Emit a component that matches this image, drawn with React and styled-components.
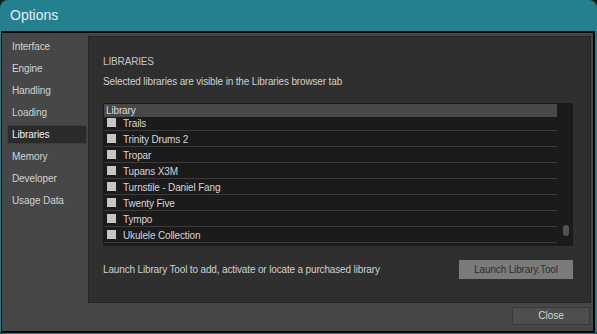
import styled, { createGlobalStyle } from "styled-components";

const GlobalStyle = createGlobalStyle`
    html, body {
        margin: 0;
        padding: 0;
        background: #1a1a1a;
    }
    * { box-sizing: border-box; }
`;

const FONT = `"Liberation Sans", Arial, sans-serif`;

const StyledWindow = styled.div`
    width: 597px;
    height: 334px;
    background: #24808f;
    border-radius: 8px 8px 3px 3px;
    display: flex;
    flex-direction: column;
    font-family: ${FONT};
    overflow: hidden;
`;

const StyledTitleBar = styled.div`
    height: 31px;
    line-height: 31px;
    padding-left: 10px;
    font-size: 14px;
    color: #e4eef0;
`;

const StyledBody = styled.div`
    flex: 1;
    margin: 0 2px 1px 1px;
    border: 1px solid #050505;
    border-width: 2px 2px 2px 1px;
    background: #474747;
    display: grid;
    grid-template-columns: 86px 1fr;
    grid-template-rows: 1fr 28px;
`;

const StyledSidebar = styled.div`
    display: flex;
    flex-direction: column;
    gap: 3px;
    padding-top: 4px;
`;

const StyledNavItem = styled.div`
    height: 19px;
    line-height: 17px;
    margin: 0 1px 0 5px;
    padding-left: 4px;
    font-size: 10px;
    letter-spacing: -0.1px;
    color: ${(p) => (p.$active ? "#f2f2f2" : "#d2d2d2")};
    background: ${(p) => (p.$active ? "#2b2b2b" : "transparent")};
    border: 1px solid ${(p) => (p.$active ? "#3d3d3d" : "transparent")};
`;

const StyledPanelWrap = styled.div`
    padding: 3px 3px 0 0;
    display: flex;
`;

const StyledPanel = styled.div`
    flex: 1;
    background: #2f2f2f;
    border: 1px solid #242424;
    padding: 18px 17px 0 14px;
    display: flex;
    flex-direction: column;
    color: #cfcfcf;
    font-size: 10px;
    letter-spacing: -0.15px;
`;

const StyledHeading = styled.div`
    height: 14px;
    line-height: 14px;
    color: #c4c4c4;
`;

const StyledText = styled.div`
    height: 14px;
    line-height: 14px;
    margin-top: ${(p) => p.$top || 0}px;
`;

const StyledList = styled.div`
    margin-top: 14px;
    width: 470px;
    height: 143px;
    background: #1b1b1b;
    padding: 1px;
    display: grid;
    grid-template-columns: 1fr 15px;
`;

const StyledColumn = styled.div`
    display: flex;
    flex-direction: column;
    overflow: hidden;
`;

const StyledListHead = styled.div`
    height: 13px;
    line-height: 13px;
    background: #484848;
    color: #dadada;
    padding-left: 2px;
    flex: none;
`;

const StyledRows = styled.div`
    flex: 1;
    overflow: hidden;
`;

const StyledRowsInner = styled.div`
    margin-top: ${(p) => -p.$scroll}px;
`;

const StyledRow = styled.div`
    height: 16px;
    border-bottom: 1px solid #3b3b3b;
    display: flex;
    align-items: center;
    padding: 1px 0 0 3px;
    gap: 7px;
    color: #d6d6d6;
`;

const StyledCheck = styled.span`
    width: 9px;
    height: 9px;
    margin-top: -1px;
    background: #c6c6c6;
    flex: none;
`;

const StyledScroll = styled.div`
    display: flex;
    flex-direction: column;
    justify-content: flex-end;
    align-items: center;
    padding: 0 2px 9px 4px;
`;

const StyledThumb = styled.div`
    width: 6px;
    height: 11px;
    border-radius: 3px;
    background: #525252;
`;

const StyledActionRow = styled.div`
    margin-top: 14px;
    display: flex;
    align-items: center;
    justify-content: space-between;
`;

const StyledToolButton = styled.div`
    width: 114px;
    height: 19px;
    line-height: 19px;
    text-align: center;
    background: #7b7b7b;
    color: #2e2e2e;
`;

const StyledFooter = styled.div`
    grid-column: 1 / 3;
    display: flex;
    justify-content: flex-end;
    padding: 4px 4px 0 0;
`;

const StyledCloseButton = styled.div`
    width: 78px;
    height: 18px;
    line-height: 16px;
    text-align: center;
    font-size: 10px;
    color: #d4d4d4;
    background: #4e4e4e;
    border: 1px solid #383838;
`;

const navItems = ["Interface", "Engine", "Handling", "Loading", "Libraries", "Memory", "Developer", "Usage Data"];

const libraries = [
    "Trails",
    "Trinity Drums 2",
    "Tropar",
    "Tupans X3M",
    "Turnstile - Daniel Fang",
    "Twenty Five",
    "Tympo",
    "Ukulele Collection",
];

export default function App() {
    return (
        <>
            <GlobalStyle />
            <StyledWindow>
                <StyledTitleBar>Options</StyledTitleBar>
                <StyledBody>
                    <StyledSidebar>
                        {navItems.map((item) => (
                            <StyledNavItem key={item} $active={item === "Libraries"}>
                                {item}
                            </StyledNavItem>
                        ))}
                    </StyledSidebar>
                    <StyledPanelWrap>
                        <StyledPanel>
                            <StyledHeading>LIBRARIES</StyledHeading>
                            <StyledText $top={6}>Selected libraries are visible in the Libraries browser tab</StyledText>
                            <StyledList>
                                <StyledColumn>
                                    <StyledListHead>Library</StyledListHead>
                                    <StyledRows>
                                        <StyledRowsInner $scroll={2}>
                                            {libraries.map((lib) => (
                                                <StyledRow key={lib}>
                                                    <StyledCheck />
                                                    {lib}
                                                </StyledRow>
                                            ))}
                                        </StyledRowsInner>
                                    </StyledRows>
                                </StyledColumn>
                                <StyledScroll>
                                    <StyledThumb />
                                </StyledScroll>
                            </StyledList>
                            <StyledActionRow>
                                <span>Launch Library Tool to add, activate or locate a purchased library</span>
                                <StyledToolButton>Launch Library.Tool</StyledToolButton>
                            </StyledActionRow>
                        </StyledPanel>
                    </StyledPanelWrap>
                    <StyledFooter>
                        <StyledCloseButton>Close</StyledCloseButton>
                    </StyledFooter>
                </StyledBody>
            </StyledWindow>
        </>
    );
}
